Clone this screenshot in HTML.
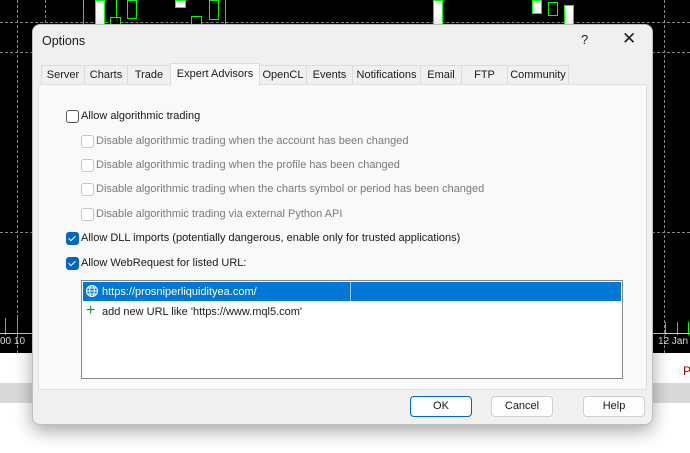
<!DOCTYPE html>
<html><head><style>
body{margin:0;width:690px;height:453px;position:relative;overflow:hidden;background:#fff;font-family:"Liberation Sans",sans-serif;font-size:11px;color:#1a1a1a}
.abs{position:absolute}
.chart{left:0;top:0;width:690px;height:353px;background:#000}
.hd{position:absolute;left:0;width:690px;border-top:1px dashed #8a8a8a}
.vd{position:absolute;top:0;height:353px;border-left:1px dashed #8a8a8a}
.c{position:absolute;background:#0f0}
.cb{position:absolute;border:1px solid #0f0;background:#fff}
.dlg{left:32px;top:24px;width:619px;height:399px;background:#f0f0f0;border-radius:8px;border:1px solid #bfbfbf;box-shadow:0 6px 18px rgba(0,0,0,.35);overflow:hidden}
.tab{position:absolute;top:40px;height:19px;line-height:19px;border:1px solid #dcdcdc;border-bottom:none;background:#f0f0f0;text-align:center}
.panel{left:5px;top:59px;width:607px;height:304px;background:#f9f9f9;border:1px solid #e0e0e0}
.chk{position:absolute;width:11px;height:11px;border:1px solid #555;border-radius:3px;background:#fff}
.dis{border-color:#c6c6c6}
.on{background:#0067c0;border-color:#0067c0}
.on:after{content:"";position:absolute;left:3px;top:1px;width:3px;height:6px;border:solid #fff;border-width:0 1.3px 1.3px 0;transform:rotate(45deg)}
.lbl{position:absolute;white-space:nowrap}
.g{color:#7a7a7a}
.btn{position:absolute;top:371px;width:60px;height:19px;line-height:19px;text-align:center;border:1px solid #cfcfcf;border-radius:4px;background:#fdfdfd}
</style></head><body>
<div class="abs chart">
<div class="hd" style="top:22px"></div><div class="hd" style="top:52px"></div><div class="hd" style="top:232px"></div>
<div class="vd" style="left:17px"></div><div class="vd" style="left:45px"></div><div class="vd" style="left:664px"></div>
<div class="c" style="left:83px;top:0;width:1px;height:30px"></div>
<div class="cb" style="left:95px;top:0;width:8px;height:30px"></div>
<div class="c" style="left:116px;top:0;width:1px;height:30px"></div>
<div class="cb" style="left:110px;top:17px;width:9px;height:10px;background:#000"></div>
<div class="cb" style="left:127px;top:0;width:8px;height:17px;background:#000"></div>
<div class="cb" style="left:175px;top:0;width:9px;height:6px"></div>
<div class="cb" style="left:191px;top:16px;width:9px;height:10px;background:#000"></div>
<div class="cb" style="left:209px;top:0;width:8px;height:18px;background:#000"></div>
<div class="c" style="left:225px;top:0;width:1px;height:25px"></div>
<div class="cb" style="left:433px;top:0;width:8px;height:25px"></div>
<div class="cb" style="left:532px;top:0;width:8px;height:12px"></div>
<div class="cb" style="left:548px;top:2px;width:8px;height:12px;background:#000"></div>
<div class="cb" style="left:564px;top:5px;width:8px;height:20px"></div>
<div class="c" style="left:5px;top:318px;width:1px;height:17px"></div><div class="c" style="left:17px;top:318px;width:1px;height:17px"></div>
<div class="c" style="left:665px;top:322px;width:1px;height:13px"></div><div class="c" style="left:677px;top:322px;width:1px;height:13px"></div><div class="c" style="left:688px;top:322px;width:1px;height:13px"></div>
<div class="abs" style="left:0;top:333px;width:690px;border-top:1px solid #ccc"></div>
<div class="lbl" style="left:0;top:336px;color:#ddd;font-size:10px">00 10</div>
<div class="lbl" style="left:658px;top:336px;color:#ddd;font-size:10px">12 Jan 0</div>
</div>
<div class="abs" style="left:0;top:383px;width:690px;height:20px;background:#d9d9d9"></div>
<div class="lbl" style="left:683px;top:364px;color:#a00;font-size:12px">P</div>
<div class="abs dlg">
<div class="lbl" style="left:9px;top:9px;font-size:12.5px">Options</div>
<div class="lbl" style="left:548px;top:7px;font-size:13px">?</div>
<div class="lbl" style="left:589px;top:4px;font-size:17px;font-weight:300">✕</div>
<div class="tab" style="left:8px;width:42px">Server</div>
<div class="tab" style="left:51px;width:42px">Charts</div>
<div class="tab" style="left:94px;width:42px">Trade</div>
<div class="tab" style="left:137px;top:38px;height:22px;width:88px;background:#f9f9f9;z-index:2;line-height:20px">Expert Advisors</div>
<div class="tab" style="left:226px;width:46px">OpenCL</div>
<div class="tab" style="left:273px;width:45px">Events</div>
<div class="tab" style="left:319px;width:67px">Notifications</div>
<div class="tab" style="left:387px;width:40px">Email</div>
<div class="tab" style="left:428px;width:45px">FTP</div>
<div class="tab" style="left:474px;width:60px">Community</div>
<div class="abs panel"></div>
<div class="chk" style="left:33px;top:85px"></div><div class="lbl" style="left:48px;top:85px">Allow algorithmic trading</div>
<div class="chk dis" style="left:48px;top:110px"></div><div class="lbl g" style="left:63px;top:110px">Disable algorithmic trading when the account has been changed</div>
<div class="chk dis" style="left:48px;top:134px"></div><div class="lbl g" style="left:63px;top:134px">Disable algorithmic trading when the profile has been changed</div>
<div class="chk dis" style="left:48px;top:158px"></div><div class="lbl g" style="left:63px;top:158px">Disable algorithmic trading when the charts symbol or period has been changed</div>
<div class="chk dis" style="left:48px;top:183px"></div><div class="lbl g" style="left:63px;top:183px">Disable algorithmic trading via external Python API</div>
<div class="chk on" style="left:33px;top:207px"></div><div class="lbl" style="left:48px;top:207px">Allow DLL imports (potentially dangerous, enable only for trusted applications)</div>
<div class="chk on" style="left:33px;top:232px"></div><div class="lbl" style="left:48px;top:232px">Allow WebRequest for listed URL:</div>
<div class="abs" style="left:48px;top:255px;width:540px;height:97px;background:#fff;border:1px solid #888"></div>
<div class="abs" style="left:50px;top:257px;width:538px;height:19px;background:#0078d7"></div>
<div class="abs" style="left:317px;top:257px;width:1px;height:19px;background:#9cc6ec"></div>
<svg class="abs" style="left:52px;top:259px" width="14" height="14" viewBox="0 0 14 14" fill="none" stroke="#fff" stroke-width="1"><circle cx="7" cy="7" r="5.5"/><ellipse cx="7" cy="7" rx="2.3" ry="5.5"/><path d="M1.5 7h11M2.5 4h9M2.5 10h9"/></svg>
<div class="lbl" style="left:69px;top:261px;color:#fff">https://prosniperliquidityea.com/</div>
<div class="lbl" style="left:53px;top:277px;color:#1a9a1a;font-size:16px">+</div>
<div class="lbl" style="left:69px;top:281px">add new URL like 'https://www.mql5.com'</div>
<div class="btn" style="left:377px;border-color:#0067c0">OK</div>
<div class="btn" style="left:458px">Cancel</div>
<div class="btn" style="left:550px">Help</div>
</div>
</body></html>
